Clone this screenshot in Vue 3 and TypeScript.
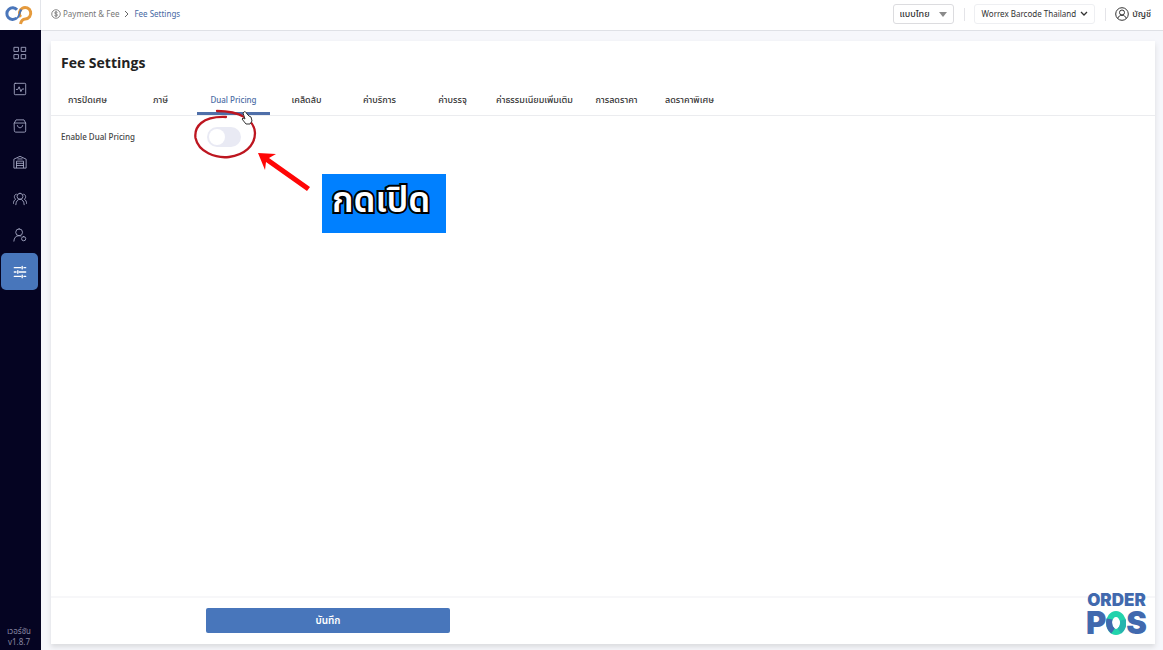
<script setup lang="ts">
import { ref } from 'vue'

interface Tab { label: string; wide?: boolean; latin?: boolean }
interface NavItem { name: string; paths: string[] }

const tabs: Tab[] = [
  { label: 'การปัดเศษ' },
  { label: 'ภาษี' },
  { label: 'Dual Pricing', latin: true },
  { label: 'เคล็ดลับ' },
  { label: 'ค่าบริการ' },
  { label: 'ค่าบรรจุ' },
  { label: 'ค่าธรรมเนียมเพิ่มเติม', wide: true },
  { label: 'การลดราคา' },
  { label: 'ลดราคาพิเศษ' },
]

const navItems: NavItem[] = [
  { name: 'Dashboard', paths: ['M1.500 1.500h4.700v4.700H1.500z M9.800 1.500h4.700v4.700H9.800z M1.500 9.800h4.700v4.700H1.500z M9.800 9.800h4.700v4.700H9.800z'] },
  { name: 'Activity', paths: ['M2.500 1.500h11a1 1 0 0 1 1 1v11a1 1 0 0 1-1 1h-11a1 1 0 0 1-1-1v-11a1 1 0 0 1 1-1z', 'M3.800 8.500h1.700L7 5.500l2 5.500 1.500-3h1.700'] },
  { name: 'Orders', paths: ['M1.500 4.500L3.500 1h9l2 3.500v9a1.500 1.500 0 0 1-1.500 1.500H3a1.500 1.500 0 0 1-1.500-1.500z M1.500 4.600h13', 'M5 7.500c.6 3.500 5.400 3.500 6 0'] },
  { name: 'Inventory', paths: ['M1 14.500V4.800L8 1.500l7 3.300v9.700z', 'M4 14.500V7h8v7.500 M4 9.500h8 M4 12h8 M5.500 4.500h5'] },
  { name: 'Customers', paths: ['M8 1.500a3.400 3.400 0 1 1 0 6.800 3.400 3.400 0 0 1 0-6.800z M3.200 14.500c.2-3.500 1.800-6.200 4.800-6.200s4.600 2.700 4.800 6.200', 'M3.800 2.500c-2.800.3-3 4.500-.8 5.800C1.500 9 .6 10.800.3 13.200 M12.200 2.500c2.800.3 3 4.500.8 5.800 1.500.7 2.400 2.500 2.700 4.900'] },
  { name: 'Staff', paths: ['M7 1a3.900 3.900 0 1 1 0 7.800A3.900 3.900 0 0 1 7 1z M1 15c.3-3.700 2-6.200 6-6.200.8 0 1.500.1 2.100.4', 'M12.200 9.800a2.400 2.400 0 1 1 0 4.800 2.400 2.400 0 0 1 0-4.800z'] },
  { name: 'Settings', paths: ['M1.500 3H9 M12.500 3h2 M1.500 8h2 M7 8h7.500 M1.500 13H9 M12.500 13h2', 'M10.500 1.500v3 M5.500 6.500v3 M10.500 11.500v3'] },
]

const activeTab = ref<string>('Dual Pricing')
const activeNav = ref<string>('Settings')
const dualPricing = ref<boolean>(false)
const language = ref<string>('th')
</script>

<template>
  <div class="app">
    <aside class="sidebar">
      <a class="brand" href="#" aria-label="OrderPOS">
        <svg width="28" height="20" viewBox="0 0 28 20" fill="none" stroke-width="3">
          <path d="M12 4.800A5.800 5.800 0 1 0 11.500 13" stroke="#4a76ba" />
          <path d="M15.800 12A5.700 5.700 0 1 1 20.300 13.900Q16.500 14 15.500 19" stroke="#e59a3c" />
          <path d="M10 14Q13.500 13 14.500 9Q15 6 16.500 4.500" stroke="#4a76ba" stroke-width="1.800" />
        </svg>
      </a>
      <nav class="nav">
        <a v-for="item in navItems" :key="item.name" href="#" :aria-label="item.name"
           :class="['nav-item', { active: item.name === activeNav }]" @click.prevent="activeNav = item.name">
          <svg width="14" height="14" viewBox="0 0 16 16" fill="none" stroke="currentColor" stroke-linecap="round" stroke-linejoin="round">
            <path v-for="p in item.paths" :key="p" :d="p" />
          </svg>
        </a>
      </nav>
      <p class="version">เวอร์ชัน<br>v1.8.7</p>
    </aside>

    <div class="content">
      <header class="topbar">
        <nav class="crumbs" aria-label="Breadcrumb">
          <svg width="10" height="10" viewBox="0 0 20 20" fill="none" stroke="#777" stroke-width="1.800">
            <circle cx="10" cy="10" r="8.500" />
            <path d="M13 7.200C12 5.300 7.200 5.500 7.200 7.800c0 2.700 5.800 1.500 5.800 4.300 0 2.500-5 2.700-6.200.5M10 4v12" />
          </svg>
          <a href="#" class="crumb">Payment &amp; Fee</a>
          <svg class="sep" width="5" height="8" viewBox="0 0 5 8" fill="none" stroke="#666"><path d="M1 1l3 3-3 3" /></svg>
          <a href="#" class="crumb current">Fee Settings</a>
        </nav>
        <div class="tools">
          <div class="select-box">
            <select v-model="language" aria-label="Language"><option value="th">แบบไทย</option></select>
            <svg width="8" height="5" viewBox="0 0 8 5" fill="#8a8a8a"><path d="M0 0h8L4 5z" /></svg>
          </div>
          <span class="divider"></span>
          <button class="store" type="button">
            <span>Worrex Barcode Thailand</span>
            <svg width="8" height="6" viewBox="0 0 8 6" fill="none" stroke="#333" stroke-width="1.300"><path d="M1 1l3 3 3-3" /></svg>
          </button>
          <span class="divider"></span>
          <button class="account" type="button">
            <svg width="14" height="14" viewBox="0 0 14 14" fill="none" stroke="#333">
              <circle cx="7" cy="7" r="6.300" /><circle cx="7" cy="5.500" r="2.500" /><path d="M2.800 11.500C3.500 7.200 10.500 7.200 11.200 11.500" />
            </svg>
            <span>บัญชี</span>
          </button>
        </div>
      </header>

      <main class="page">
        <section class="card">
          <h1>Fee Settings</h1>
          <div class="tabs" role="tablist">
            <button v-for="tab in tabs" :key="tab.label" type="button" role="tab" :aria-selected="tab.label === activeTab"
                    :class="['tab', { wide: tab.wide, latin: tab.latin, active: tab.label === activeTab }]" @click="activeTab = tab.label">
              {{ tab.label }}
            </button>
          </div>
          <div class="field">
            <label for="dual">Enable Dual Pricing</label>
            <input id="dual" v-model="dualPricing" type="checkbox" role="switch" class="switch">
          </div>
          <footer class="actions">
            <button class="save" type="button">บันทึก</button>
          </footer>
        </section>
      </main>
    </div>

    <svg class="marks" width="130" height="90" viewBox="0 0 130 90" fill="none">
      <path d="M36 11C12 10 4 21 5.500 32c3 14 20 20.500 33.500 19 15-2 26-11 26-24C64.500 14 50 5 27 5" stroke="#bd1620" stroke-width="2.300" stroke-linecap="round" />
      <path d="M68 47l18 1-7 4 41 29-3 4-41-29-1 8z" fill="#ff0606" />
      <path d="M54 6c1-1 2 0 3 2l2 2 2 1 1 4-2 3h-4l-4-5 1-1 2 1-2-6z" fill="#fff" stroke="#333" />
    </svg>
    <div class="callout">กดเปิด</div>
    <div class="watermark">
      <span class="order">ORDER</span>
      <span class="pos">P<svg width="20" height="24" viewBox="0 0 20 24" fill="none" stroke-width="6" role="img" aria-label="O">
        <ellipse cx="10" cy="12" rx="7" ry="9" stroke="#22d3ac" />
        <path d="M3.500 8C2.500 13 3.500 17.500 7 20" stroke="#4169ae" />
        <path d="M16.800 9c1 4 0 8.500-3.500 11" stroke="#27b4ae" />
      </svg>S</span>
    </div>
  </div>
</template>

<style>
body { margin: 0; }
</style>

<style scoped>
* { box-sizing: border-box; }
.app { display: flex; min-height: 100vh; position: relative; background: #f6f7fb; color: #333; font: 8px/14px "Noto Sans", "Noto Sans Thai", "Open Sans", sans-serif; }
button, select { font: inherit; color: inherit; border: 0; background: none; padding: 0; }
a { color: inherit; text-decoration: none; }
.sidebar { width: 41px; flex: none; display: flex; flex-direction: column; background: #050422; }
.brand { height: 30px; display: flex; align-items: center; justify-content: center; padding: 0 2px 1px 0; background: #fff; border-right: 1px solid #e3e5ea; }
.nav { display: flex; flex-direction: column; padding: 4px 3px 0 1px; }
.nav-item { height: 37px; display: flex; align-items: center; justify-content: center; border-radius: 5px; color: #a7aac6; }
.nav-item:nth-child(even) { height: 36px; }
.nav-item.active { background: #4876bb; color: #fff; }
.nav-item.active svg { stroke-width: 1.5; }
.version { margin: auto 0 3px; padding-right: 3px; text-align: center; line-height: 11px; color: #8586a0; }
.content { flex: 1; min-width: 0; display: flex; flex-direction: column; }
.topbar { height: 31px; display: flex; align-items: center; justify-content: space-between; padding: 0 12px 2px 10px; background: #fff; border-bottom: 1px solid #dfe1e6; }
.crumbs, .tools { display: flex; align-items: center; }
.crumb { margin-left: 2px; color: #777; }
.sep { margin: 0 3px 0 5px; }
.crumb.current { color: #4668a3; }
.select-box { width: 61px; height: 20px; display: flex; align-items: center; padding: 0 6px; border: 1px solid #dcdcdf; border-radius: 3px; }
.select-box select { flex: 1; min-width: 0; appearance: none; outline: 0; font-size: 9px; font-weight: 500; }
.divider { width: 1px; height: 13px; margin: 0 9px 0 10px; background: #e4e4e8; }
.store { height: 20px; display: flex; align-items: center; gap: 4px; padding: 0 6px 0 7px; border: 1px solid #eeeff2; border-radius: 3px; }
.account { display: flex; align-items: center; gap: 3px; font-size: 9px; font-weight: 500; }
.page { flex: 1; display: flex; padding: 10px 8px 6px 10px; }
.card { flex: 1; display: flex; flex-direction: column; background: #fff; box-shadow: 0 3px 5px #dadbde; }
h1 { margin: 12px 10px 0; font-family: "Open Sans", sans-serif; font-size: 14px; line-height: 20px; color: #222; }
.tabs { display: flex; height: 43px; border-bottom: 1px solid #ebecef; }
.tab { width: 73px; height: 42px; padding-top: 16px; display: flex; justify-content: center; white-space: nowrap; font-size: 9px; font-weight: 500; line-height: 22px; border-bottom: 3px solid transparent; }
.tab.latin { font-size: 8px; }
.tab.wide { width: 91px; }
.tab.active { color: #4c6da5; border-color: #4f6fa9; }
.field { display: flex; align-items: center; height: 42px; padding-left: 10px; font-weight: 500; color: #444; }
.field label { width: 146px; }
.switch { appearance: none; width: 34px; height: 20px; margin: 0; border-radius: 10px; background: #e9eaf4; }
.switch::before { content: ""; display: block; width: 16px; height: 16px; margin: 2px; border-radius: 50%; background: #fff; }
.switch:checked { background: #4876bb; }
.switch:checked::before { margin-left: 16px; }
.actions { margin-top: auto; height: 48px; display: flex; align-items: center; padding: 0 0 2px 155px; border-top: 2px solid #f7f7f9; }
.save { width: 244px; height: 25px; border-radius: 2px; background: #4876bb; color: #fff; font-size: 10px; font-weight: 600; }
.marks { position: absolute; left: 190px; top: 106px; pointer-events: none; }
.callout { position: absolute; left: 322px; top: 174px; width: 124px; height: 59px; padding: 3px 0 0 10px; background: #0080ff; color: #fff; font-size: 35px; line-height: 44px; font-weight: 600; -webkit-text-stroke: 4px #000; paint-order: stroke fill; white-space: nowrap; }
.watermark { position: absolute; right: 16px; bottom: 14px; display: flex; flex-direction: column; align-items: center; color: #4169ae; font-family: Inter, Roboto, sans-serif; font-weight: 900; }
.order { font-size: 17px; line-height: 20px; }
.pos { display: flex; align-items: center; font-size: 31px; line-height: 26px; }
</style>
